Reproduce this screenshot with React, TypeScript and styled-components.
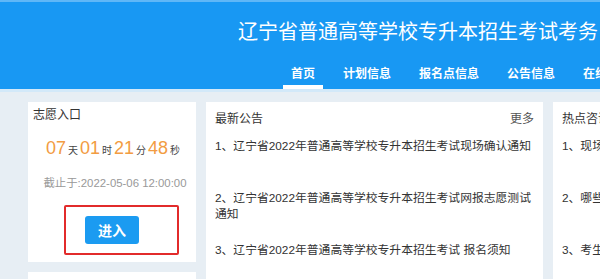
import React from "react";
import styled, { createGlobalStyle } from "styled-components";

const GlobalStyle = createGlobalStyle`
  html, body {
    margin: 0;
    padding: 0;
    width: 600px;
    height: 279px;
    overflow: hidden;
    background: #e7eef4;
    font-family: "Liberation Sans", "Noto Sans CJK SC", sans-serif;
  }
  * { box-sizing: border-box; }
`;

const Page = styled.div`
  width: 600px;
  height: 279px;
  overflow: hidden;
  background: #e7eef4;
`;

const Header = styled.header`
  height: 92px;
  background: #1898f3;
  border-top: 2px solid #5fb7f7;
  border-bottom: 3px solid #d3e9f9;
  display: flex;
  flex-direction: column;
  overflow: hidden;
`;

const Title = styled.h1`
  margin: 0;
  height: 58px;
  line-height: 58px;
  padding-left: 238px;
  font-family: "Noto Sans CJK SC", sans-serif;
  font-weight: 400;
  font-size: 20px;
  color: #ffffff;
  white-space: nowrap;
`;

const Nav = styled.nav`
  display: flex;
  gap: 12px;
  height: 29px;
  padding-left: 283px;
  white-space: nowrap;
`;

const NavItem = styled.a<{ $active?: boolean }>`
  position: relative;
  padding: 0 8px;
  height: 29px;
  line-height: 26px;
  font-family: "Noto Sans CJK SC", sans-serif;
  font-size: 12px;
  font-weight: 700;
  color: #ffffff;
  text-decoration: none;
  flex-shrink: 0;
  &::after {
    content: "";
    position: absolute;
    left: 0;
    right: 0;
    bottom: 0;
    height: 4px;
    background: ${(p) => (p.$active ? "#ffffff" : "transparent")};
  }
`;

const Main = styled.main`
  display: flex;
  gap: 10px;
  padding: 10px 0 0 28px;
  overflow: hidden;
`;

const Column = styled.div<{ $w: number }>`
  width: ${(p) => p.$w}px;
  flex-shrink: 0;
  display: flex;
  flex-direction: column;
  gap: 10px;
`;

const Card = styled.section<{ $h: number }>`
  position: relative;
  background: #ffffff;
  height: ${(p) => p.$h}px;
  padding: 9px;
`;

const EntryCard = styled(Card)`
  padding: 5px 5px 0;
  display: flex;
  flex-direction: column;
  align-items: center;
`;

const CardHead = styled.div`
  align-self: stretch;
  display: flex;
  justify-content: space-between;
  font-size: 12px;
  line-height: 16px;
  color: #333333;
  white-space: nowrap;
`;

const More = styled.span`
  color: #555555;
`;

const Countdown = styled.div`
  margin-top: 13px;
  height: 24px;
  line-height: 24px;
  white-space: nowrap;
  display: flex;
  align-items: baseline;
  padding-left: 4px;
`;

const Num = styled.span`
  font-family: "Liberation Sans", sans-serif;
  font-size: 18px;
  color: #f29c42;
`;

const Unit = styled.span`
  font-size: 10px;
  color: #444444;
  margin: 0 2px 0 2px;
`;

const Deadline = styled.div`
  margin-top: 15px;
  padding-left: 6px;
  font-size: 11.4px;
  line-height: 16px;
  color: #999999;
  white-space: nowrap;
`;

const EnterButton = styled.button`
  margin-top: 25px;
  width: 54px;
  height: 28px;
  border: none;
  border-radius: 3px;
  background: #1b9bf1;
  color: #ffffff;
  font-family: "Noto Sans CJK SC", sans-serif;
  font-size: 14px;
  font-weight: 700;
  padding: 0;
`;

const Highlight = styled.div`
  position: absolute;
  left: 36px;
  top: 103px;
  width: 115px;
  height: 50px;
  border: 2px solid #e22b2b;
  border-radius: 2px;
  pointer-events: none;
`;

const List = styled.ul`
  list-style: none;
  margin: 11px 0 0;
  padding: 0;
`;

const Item = styled.li`
  height: 52px;
  font-size: 11.8px;
  line-height: 16px;
  color: #333333;
`;

const RightItem = styled(Item)`
  white-space: nowrap;
`;

const notices = [
  "1、辽宁省2022年普通高等学校专升本招生考试现场确认通知",
  "2、辽宁省2022年普通高等学校专升本招生考试网报志愿测试通知",
  "3、辽宁省2022年普通高等学校专升本招生考试 报名须知",
];

const hot = [
  "1、现场确认需要携带哪些材料？",
  "2、哪些考生可以报考专升本？",
  "3、考生如何查询报名信息？",
];

const navs = ["首页", "计划信息", "报名点信息", "公告信息", "在线咨询"];

export default function App() {
  return (
    <Page>
      <GlobalStyle />
      <Header>
        <Title>辽宁省普通高等学校专升本招生考试考务</Title>
        <Nav>
          {navs.map((n, i) => (
            <NavItem key={n} $active={i === 0}>
              {n}
            </NavItem>
          ))}
        </Nav>
      </Header>
      <Main>
        <Column $w={168}>
          <EntryCard $h={160}>
            <CardHead>志愿入口</CardHead>
            <Countdown>
              <Num>07</Num>
              <Unit>天</Unit>
              <Num>01</Num>
              <Unit>时</Unit>
              <Num>21</Num>
              <Unit>分</Unit>
              <Num>48</Num>
              <Unit>秒</Unit>
            </Countdown>
            <Deadline>截止于:2022-05-06 12:00:00</Deadline>
            <EnterButton>进入</EnterButton>
            <Highlight />
          </EntryCard>
          <Card $h={120} />
        </Column>
        <Column $w={337}>
          <Card $h={220}>
            <CardHead>
              <span>最新公告</span>
              <More>更多</More>
            </CardHead>
            <List>
              {notices.map((t) => (
                <Item key={t}>{t}</Item>
              ))}
            </List>
          </Card>
        </Column>
        <Column $w={300}>
          <Card $h={220}>
            <CardHead>
              <span>热点咨询</span>
              <More>更多</More>
            </CardHead>
            <List>
              {hot.map((t) => (
                <RightItem key={t}>{t}</RightItem>
              ))}
            </List>
          </Card>
        </Column>
      </Main>
    </Page>
  );
}
